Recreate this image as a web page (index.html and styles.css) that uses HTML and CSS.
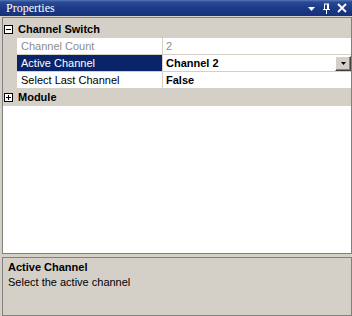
FILE: index.html
```html
<!DOCTYPE html>
<html>
<head>
  <meta charset="utf-8" />
  <title>Properties</title>
  <link rel="stylesheet" href="styles.css">
</head>
<body>
<div id="propWindow">
  <div class="titleBar">
    <span class="titleText">Properties</span>
    <div class="titleButtons">
      <svg width="9" height="9" viewBox="0 0 9 9"><path d="M1 3h7l-3.5 4z" fill="#fff" /></svg>
      <svg width="9" height="11" viewBox="0 0 9 11"><path d="M2 1h5M2.5 1v5M5.5 1v5M6.5 1v5M1 6.5h7M4.5 7v4" stroke="#fff" stroke-width="1" fill="none" /></svg>
      <svg width="10" height="10" viewBox="0 0 10 10"><path d="M1 1l8 8M9 1l-8 8" stroke="#fff" stroke-width="1.8" fill="none" /></svg>
    </div>
  </div>

  <div class="grid">
    <div class="category">
      <svg class="expander" width="9" height="9" viewBox="0 0 9 9"><rect x="0.5" y="0.5" width="8" height="8" fill="#fff" stroke="#000" /><path d="M2 4.5h5" stroke="#000" /></svg>
      <span class="catName">Channel Switch</span>
    </div>
    <div class="propRow disabled">
      <div class="margin"></div>
      <div class="name">Channel Count</div>
      <div class="value">2</div>
    </div>
    <div class="propRow selected">
      <div class="margin"></div>
      <div class="name">Active Channel</div>
      <div class="value bold">Channel 2
        <span class="dropButton"><svg width="5" height="3" viewBox="0 0 5 3"><path d="M0 0h5l-2.5 3z" fill="#000" /></svg></span>
      </div>
    </div>
    <div class="propRow">
      <div class="margin"></div>
      <div class="name">Select Last Channel</div>
      <div class="value bold">False</div>
    </div>
    <div class="category">
      <svg class="expander" width="9" height="9" viewBox="0 0 9 9"><rect x="0.5" y="0.5" width="8" height="8" fill="#fff" stroke="#000" /><path d="M2 4.5h5M4.5 2v5" stroke="#000" /></svg>
      <span class="catName">Module</span>
    </div>
    <div class="filler"></div>
  </div>

  <div class="description">
    <div class="descTitle">Active Channel</div>
    <div class="descText">Select the active channel</div>
  </div>
</div>
</body>
</html>
```

FILE: styles.css
```css
* { margin: 0; padding: 0; box-sizing: border-box; }
body { background: #d4d0c8; font-family: "Liberation Sans", Arial, sans-serif; font-size: 11px; color: #000; }
#propWindow { width: 352px; height: 316px; display: flex; flex-direction: column; }

.titleBar { height: 16px; display: flex; align-items: center; justify-content: space-between; padding: 0 5px 0 6px; background: linear-gradient(to bottom, #5876b8 0, #2a4a96 2px, #1c3a86 8px, #15317a 100%); color: #fff; }
.titleText { font-family: "Liberation Serif", "Times New Roman", serif; font-size: 12px; line-height: 16px; }
.titleButtons { display: flex; align-items: center; gap: 6px; }
.titleButtons svg { display: block; }

.grid { margin: 1px 0 0 2px; height: 237px; border: 1px solid #808080; background: #d4d0c8; padding-top: 3px; display: flex; flex-direction: column; }
.category { height: 17px; display: flex; align-items: center; padding-bottom: 1px; }
.expander { display: block; margin: 0 5px 0 1px; }
.catName { font-weight: bold; }

.propRow { height: 17px; display: grid; grid-template-columns: 14px 146px 1fr; }
.propRow .name, .propRow .value { background: #fff; border-bottom: 1px solid #d4d0c8; line-height: 16px; white-space: nowrap; }
.propRow .name { padding-left: 4px; border-right: 1px solid #d4d0c8; }
.propRow .value { padding-left: 3px; display: flex; justify-content: space-between; }
.propRow .bold { font-weight: bold; }
.disabled .name, .disabled .value { color: #8c8c8c; }
.selected .name { background: #0a246a; color: #fff; }

.dropButton { width: 16px; height: 15px; margin-top: 1px; display: flex; align-items: center; justify-content: center; background: #d4d0c8; border: 1px solid; border-color: #fff #404040 #404040 #fff; box-shadow: inset -1px -1px 0 #808080; }
.dropButton svg { display: block; }

.filler { flex: 1; background: #fff; }

.description { margin: 3px 0 0 2px; height: 59px; border: 1px solid #808080; padding: 3px 5px; }
.descTitle { font-weight: bold; line-height: 13px; }
.descText { margin-top: 2px; line-height: 13px; }
```
